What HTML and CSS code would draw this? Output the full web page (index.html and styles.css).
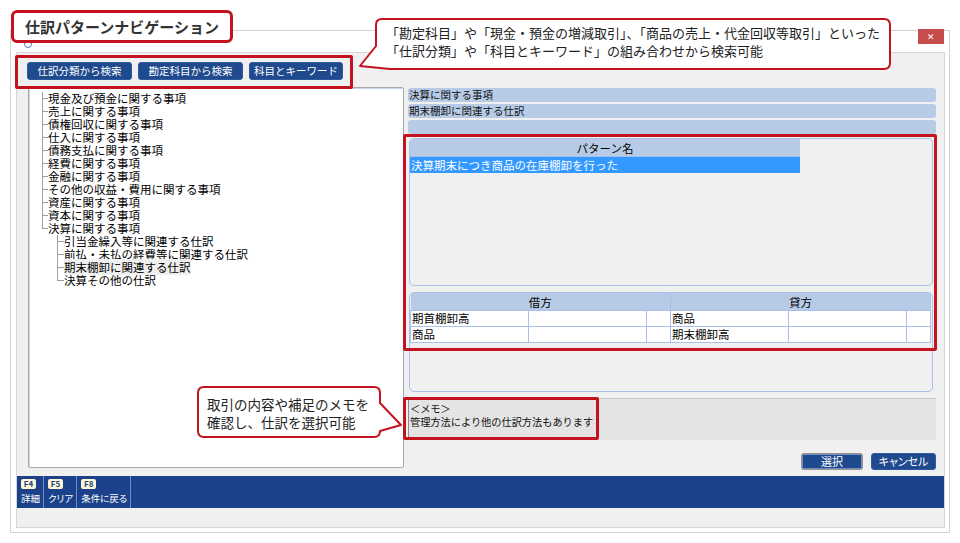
FILE: index.html
```html
<!DOCTYPE html>
<html lang="ja">

<head>
    <meta charset="UTF-8">
    <title>仕訳パターンナビゲーション</title>
    <link rel="stylesheet" href="styles.css">
</head>

<body>
    <!-- Dialog window -->
    <div class="window">
        <div class="titlebar">
            <span class="app-icon"></span>
            <span class="close">&#x2715;</span>
        </div>

        <div class="frame">
            <div class="toolbar">
                <button class="btn">仕訳分類から検索</button>
                <button class="btn">勘定科目から検索</button>
                <button class="btn btn-short">科目とキーワード</button>
            </div>

            <div class="main">
                <!-- Category tree -->
                <div class="tree-panel">
                    <ul class="tree">
                        <li>現金及び預金に関する事項</li>
                        <li>売上に関する事項</li>
                        <li>債権回収に関する事項</li>
                        <li>仕入に関する事項</li>
                        <li>債務支払に関する事項</li>
                        <li>経費に関する事項</li>
                        <li>金融に関する事項</li>
                        <li>その他の収益・費用に関する事項</li>
                        <li>資産に関する事項</li>
                        <li>資本に関する事項</li>
                        <li class="last">決算に関する事項
                            <ul>
                                <li>引当金繰入等に関連する仕訳</li>
                                <li>前払・未払の経費等に関連する仕訳</li>
                                <li><span class="current">期末棚卸に関連する仕訳</span></li>
                                <li class="last">決算その他の仕訳</li>
                            </ul>
                        </li>
                    </ul>
                </div>

                <!-- Pattern detail -->
                <div class="detail">
                    <div class="crumbs">
                        <div class="crumb">決算に関する事項</div>
                        <div class="crumb">期末棚卸に関連する仕訳</div>
                        <div class="crumb"></div>
                    </div>

                    <div class="panel pattern-panel">
                        <table class="pattern">
                            <tr><th>パターン名</th></tr>
                            <tr class="selected"><td>決算期末につき商品の在庫棚卸を行った</td></tr>
                        </table>
                    </div>

                    <div class="panel entry-panel">
                        <table class="entry">
                            <colgroup>
                                <col class="c-name"><col class="c-amount"><col class="c-tax">
                                <col class="c-name"><col class="c-amount"><col class="c-tax">
                            </colgroup>
                            <tr><th colspan="3">借方</th><th colspan="3">貸方</th></tr>
                            <tr><td>期首棚卸高</td><td></td><td></td><td>商品</td><td></td><td></td></tr>
                            <tr><td>商品</td><td></td><td></td><td>期末棚卸高</td><td></td><td></td></tr>
                        </table>
                    </div>

                    <div class="memo">＜メモ＞<br>管理方法により他の仕訳方法もあります</div>

                    <div class="actions">
                        <button class="btn action focused">選択</button>
                        <button class="btn action">キャンセル</button>
                    </div>
                </div>
            </div>

            <!-- Function keys -->
            <div class="fkeys">
                <div class="fkey"><span class="key">F4</span><span class="label">詳細</span></div>
                <div class="fkey"><span class="key">F5</span><span class="label">クリア</span></div>
                <div class="fkey"><span class="key">F8</span><span class="label">条件に戻る</span></div>
            </div>
            <div class="status"></div>
        </div>
    </div>

    <!-- Annotations -->
    <div class="note-title">仕訳パターンナビゲーション</div>
    <div class="mark mark-toolbar"></div>
    <div class="mark mark-detail"></div>
    <div class="mark mark-memo"></div>

    <div class="callout callout-search">
        <svg width="540" height="60" viewBox="0 0 540 60">
            <path d="M26 3 H528 Q534 3 534 9 V47 Q534 53 528 53 H34 L4 50 L20 30 V9 Q20 3 26 3 Z" />
        </svg>
        <p>「勘定科目」や「現金・預金の増減取引」、「商品の売上・代金回収等取引」といった<br>「仕訳分類」や「科目とキーワード」の組み合わせから検索可能</p>
    </div>

    <div class="callout callout-memo">
        <svg width="210" height="56" viewBox="0 0 210 56">
            <path d="M8 2 H178 Q184 2 184 8 V18 L205 40 L184 46 Q184 52 178 52 H8 Q2 52 2 46 V8 Q2 2 8 2 Z" />
        </svg>
        <p>取引の内容や補足のメモを<br>確認し、仕訳を選択可能</p>
    </div>
</body>

</html>
```

FILE: styles.css
```css
/* Base */
body {
    margin: 0;
    background: #fff;
    font-family: "Noto Sans CJK JP", "Noto Sans", sans-serif;
    color: #000;
    position: relative;
    width: 960px;
    height: 543px;
    overflow: hidden;
}

ul, p {
    margin: 0;
    padding: 0;
}

button {
    font-family: inherit;
}

/* Window */
.window {
    box-sizing: border-box;
    width: 940px;
    height: 503px;
    margin: 30px 0 0 10px;
    border: 1px solid #d2d2d2;
    background: #fff;
}

.titlebar {
    height: 21px;
    display: flex;
    justify-content: space-between;
    align-items: flex-start;
}

.app-icon {
    width: 6px;
    height: 6px;
    margin: 9px 0 0 13px;
    border: 1px solid #5577bb;
    border-radius: 50%;
}

.close {
    width: 26px;
    height: 15px;
    margin: -2px 5px 0 0;
    background: #c74c4c;
    color: #fff;
    font-size: 9px;
    line-height: 15px;
    text-align: center;
}

.frame {
    box-sizing: border-box;
    height: 476px;
    margin: 0 4px 0 5px;
    border: 1px solid #d6d6d6;
    background: #f0f0f0;
    display: flex;
    flex-direction: column;
}

/* Buttons */
.btn {
    height: 18px;
    padding: 0;
    border: 1px solid #2f5aa0;
    border-radius: 3px;
    background: #1f4a8e;
    color: #fff;
    font-size: 10.5px;
    line-height: 16px;
    cursor: pointer;
}

.toolbar {
    height: 34px;
    box-sizing: border-box;
    padding: 9px 0 0 10px;
    display: flex;
    gap: 6px;
}

.toolbar .btn {
    width: 105px;
}

.toolbar .btn-short {
    width: 94px;
}

/* Main area */
.main {
    height: 382px;
    padding: 0 7px 0 11px;
    display: grid;
    grid-template-columns: 376px 528px;
    column-gap: 4px;
}

.tree-panel {
    box-sizing: border-box;
    height: 381px;
    border: 1px solid #a9a9a9;
    border-radius: 2px;
    background: #fff;
    box-shadow: inset 1px 1px 0 #c9d7ee;
    padding: 4px 0 0 13px;
}

.tree {
    list-style: none;
    font-size: 11.5px;
    line-height: 13px;
}

.tree li {
    position: relative;
    padding-left: 6px;
    white-space: nowrap;
    list-style: none;
}

.tree li::before {
    content: '';
    position: absolute;
    left: 0;
    top: 0;
    width: 5px;
    height: 6px;
    border-left: 1px solid #a0a0a0;
    border-bottom: 1px solid #a0a0a0;
}

.tree li::after {
    content: '';
    position: absolute;
    left: 0;
    top: 6px;
    bottom: 0;
    border-left: 1px solid #a0a0a0;
}

.tree li.last::after {
    display: none;
}

.tree ul {
    padding-left: 9px;
}

.tree ul li {
    padding-left: 7px;
}

.tree ul li::before {
    width: 6px;
}

.current {
    background: #f0f0f0;
}

/* Detail column */
.detail {
    padding-top: 1px;
    display: flex;
    flex-direction: column;
}

.crumbs {
    display: flex;
    flex-direction: column;
    gap: 2px;
}

.crumb {
    height: 14px;
    padding-left: 1px;
    border-radius: 3px;
    background: #b8cbe6;
    font-size: 10.5px;
    line-height: 14px;
    color: #111;
}

.panel {
    box-sizing: border-box;
    border: 1px solid #a9c1ea;
    border-radius: 5px;
    background: #f0f0f0;
    overflow: hidden;
}

.pattern-panel {
    height: 148px;
    margin: 4px 3px 0 1px;
}

table {
    border-collapse: collapse;
    font-size: 11.5px;
}

.pattern {
    width: 390px;
}

.pattern th {
    height: 17px;
    padding: 0;
    background: #b8cbe6;
    font-weight: normal;
    line-height: 16px;
    border-bottom: 1px solid #a9c1ea;
}

.pattern td {
    height: 16px;
    padding: 0 0 0 1px;
    line-height: 16px;
}

.pattern .selected td {
    background: #3399ff;
    color: #fff;
}

.entry-panel {
    height: 100px;
    margin: 6px 3px 0 1px;
}

.entry {
    width: 519px;
    table-layout: fixed;
}

.c-name,
.c-amount {
    width: 118px;
}

.c-tax {
    width: 24px;
}

.entry th {
    height: 17px;
    padding: 0;
    background: #b8cbe6;
    font-weight: normal;
    line-height: 16px;
    border-right: 1px solid #a9c1ea;
}

.entry td {
    height: 15px;
    padding: 0 0 0 1px;
    background: #fff;
    border: 1px solid #a9c1ea;
    line-height: 15px;
    white-space: nowrap;
}

.memo {
    height: 42px;
    box-sizing: border-box;
    margin-top: 6px;
    padding: 3px 0 0 1px;
    background: #e4e4e4;
    border-left: 1px solid #8a8a8a;
    border-top: 1px solid #c8c8c8;
    font-size: 10.2px;
    line-height: 13px;
    color: #111;
}

.actions {
    margin-top: 13px;
    display: flex;
    justify-content: flex-end;
    gap: 8px;
}

.action {
    height: 17px;
    font-size: 11px;
    line-height: 15px;
    font-feature-settings: "palt";
}

.action.focused {
    width: 62px;
    border-color: #9c8f88;
    box-shadow: inset 0 0 0 1px #6f8fc8;
}

.action:not(.focused) {
    width: 65px;
}

/* Function key bar */
.fkeys {
    height: 32px;
    margin-top: 7px;
    background: #1a4189;
    display: flex;
}

.fkey {
    padding: 3px 3px 0 4px;
    border-right: 1px solid #6f8cc4;
    display: flex;
    flex-direction: column;
    align-items: flex-start;
}

.key {
    width: 15px;
    height: 10px;
    border-radius: 2px;
    background: #fff6d5;
    color: #1a4189;
    font-size: 8px;
    font-weight: bold;
    line-height: 10px;
    text-align: center;
}

.label {
    margin-top: 3px;
    color: #fff;
    font-size: 9.5px;
    line-height: 13px;
    font-feature-settings: "palt";
}

.status {
    flex: 1;
}

/* Annotations */
.note-title {
    position: absolute;
    left: 11px;
    top: 10px;
    width: 222px;
    height: 33px;
    box-sizing: border-box;
    padding-left: 11px;
    border: 3px solid #c4131f;
    border-radius: 6px;
    background: #fff;
    color: #333;
    font-size: 15px;
    font-weight: bold;
    line-height: 27px;
}

.mark {
    position: absolute;
    box-sizing: border-box;
    border: 3px solid #c4131f;
    border-radius: 2px;
}

.mark-toolbar {
    left: 15px;
    top: 55px;
    width: 338px;
    height: 34px;
}

.mark-detail {
    left: 403px;
    top: 134px;
    width: 534px;
    height: 217px;
}

.mark-memo {
    left: 403px;
    top: 397px;
    width: 196px;
    height: 43px;
}

.callout {
    position: absolute;
}

.callout svg {
    display: block;
}

.callout path {
    fill: #fff;
    stroke: #c4131f;
    stroke-width: 2;
    stroke-linejoin: round;
}

.callout p {
    position: absolute;
    color: #222;
    white-space: nowrap;
}

.callout-search {
    left: 356px;
    top: 16px;
}

.callout-search p {
    left: 30px;
    top: 8px;
    font-size: 13px;
    line-height: 18px;
}

.callout-memo {
    left: 196px;
    top: 385px;
}

.callout-memo p {
    left: 11px;
    top: 10px;
    font-size: 13.5px;
    line-height: 18px;
}
```
